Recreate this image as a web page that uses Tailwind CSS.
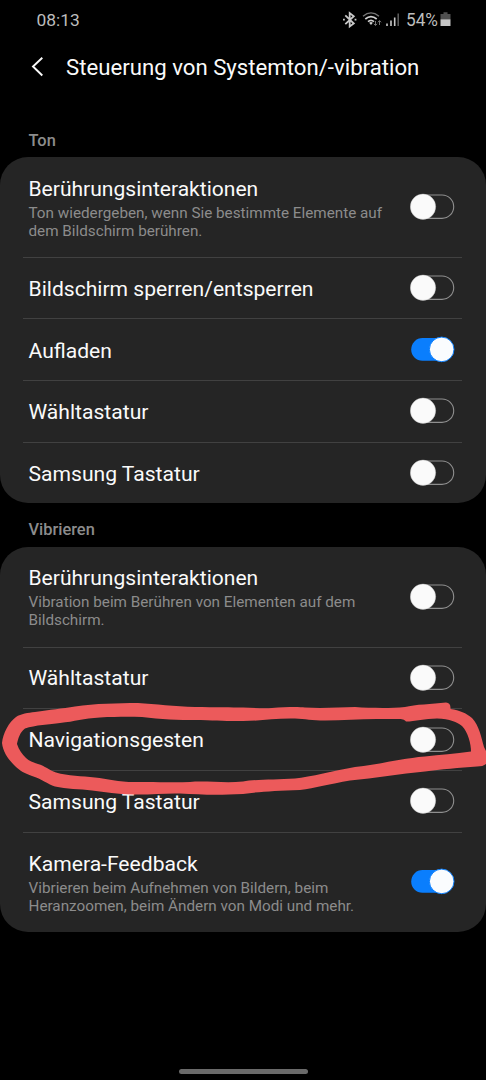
<!DOCTYPE html>
<html lang="de">
<head>
<meta charset="utf-8">
<title>Steuerung von Systemton/-vibration</title>
<script src="https://cdn.jsdelivr.net/npm/@tailwindcss/browser@4"></script>
</head>
<body class="bg-black">
<svg class="hidden">
  <symbol id="off" viewBox="0 0 46 28"><rect x="3.3" y="2" width="40.4" height="23.4" rx="11.7" fill="none" stroke="#8f8f8f" stroke-width="1.1"/><circle cx="13" cy="13.7" r="12.7" fill="#fafafa" stroke="#bbb" stroke-width=".4"/></symbol>
  <symbol id="on" viewBox="0 0 46 28"><rect x="1.2" y="2.1" width="42.3" height="22.6" rx="11.3" fill="#0a7efd"/><circle cx="31.7" cy="13.4" r="12.3" fill="#fafcfe" stroke="#0a7efd" stroke-width="1"/></symbol>
</svg>
<div class="relative flex h-[1080px] w-[486px] flex-col overflow-hidden bg-black font-['Roboto',sans-serif] text-[#fafafa]">
  <header class="flex h-10 shrink-0 items-center justify-between pr-[34px] pl-[36.5px] text-[#bdbdbd]">
    <span class="text-[17.4px] leading-10">08:13</span>
    <svg class="h-[18px] w-[110px]" viewBox="342 11 110 18" fill="none">
      <path d="M345.3 15.300l8.500 8.200-4.100 3V13l4.100 3.200-8.500 8" stroke="#c8c8c8" stroke-width="1.8"/>
      <path d="M343 19.7h1.8M354.6 19.7h1.8" stroke="#c8c8c8" stroke-width="1.7"/>
      <path d="M363 16.2q8-6.600 16 0" stroke="#777" stroke-width="1.4"/>
      <path d="M365.300 19q5.700-4.800 11.400 0M368 21.700q3-2.600 6 0" stroke="#d0d0d0" stroke-width="1.7"/>
      <path d="M369.100 22.800q1.900-1.500 3.800 0l-1.900 2.200z" fill="#d0d0d0"/>
      <path d="M375.500 21v4.300m-1.600-1.500l1.600 1.700 1.600-1.700M379.500 25v-4.300m-1.600 1.600l1.600-1.700 1.600 1.700" stroke="#777" stroke-width="1"/>
      <path d="M387 23.500V26M391 20.500V26M394.700 17.500V26" stroke="#c8c8c8" stroke-width="1.6"/>
      <path d="M398.200 13.500V26" stroke="#666" stroke-width="1.4"/>
      <text x="406" y="26" font-size="17.6" fill="#bdbdbd" textLength="32" lengthAdjust="spacingAndGlyphs">54%</text>
      <path d="M440.500 14h3v-1.700h4V14h3v5.500h-10z" fill="#505050"/>
      <path d="M440.500 19.300h10V26h-10z" fill="#c6c6c6"/>
    </svg>
  </header>

  <div class="flex h-[54px] shrink-0 items-center pl-[30px]">
    <svg class="h-6 w-4" viewBox="0 0 16 24" fill="none" stroke="#fafafa" stroke-width="1.9"><path d="M12.3 2.7L3 11.5l9.3 9"/></svg>
    <h1 class="ml-5 text-[22.2px] leading-[54px] whitespace-nowrap">Steuerung von Systemton/-vibration</h1>
  </div>

  <h2 class="mt-[35.5px] h-[27px] shrink-0 pl-[28.5px] text-[16.4px] leading-[22px] font-medium text-[#8c8c8c]">Ton</h2>
  <section class="h-[346.5px] shrink-0 rounded-[28px] bg-[#252525] pr-6 pl-[23px]">
    <div class="flex h-[101.2px] justify-between border-b border-[#414141] pr-1.5 pl-[5.5px]">
      <div class="pt-5"><p class="text-[21.05px] leading-6">Berührungsinteraktionen</p><p class="mt-[3px] text-[15.25px] leading-[18px] whitespace-nowrap text-[#8c8c8c]">Ton wiedergeben, wenn Sie bestimmte Elemente auf<br>dem Bildschirm berühren.</p></div>
      <svg class="h-7 w-[46px] self-center"><use href="#off"/></svg>
    </div>
    <div class="flex h-[61.7px] justify-between border-b border-[#414141] pr-1.5 pl-[5.5px]">
      <p class="pt-[19.5px] text-[21.1px] leading-6">Bildschirm sperren/entsperren</p><svg class="h-7 w-[46px] self-center"><use href="#off"/></svg>
    </div>
    <div class="flex h-[61.7px] justify-between border-b border-[#414141] pr-1.5 pl-[5.5px]">
      <p class="pt-[19.5px] text-[21.1px] leading-6">Aufladen</p><svg class="h-7 w-[46px] self-center"><use href="#on"/></svg>
    </div>
    <div class="flex h-[61.7px] justify-between border-b border-[#414141] pr-1.5 pl-[5.5px]">
      <p class="pt-[18.8px] text-[21.1px] leading-6">Wähltastatur</p><svg class="h-7 w-[46px] self-center"><use href="#off"/></svg>
    </div>
    <div class="flex h-[60.2px] justify-between pr-1.5 pl-[5.5px]">
      <p class="pt-[18.8px] text-[21.1px] leading-6">Samsung Tastatur</p><svg class="h-7 w-[46px] self-center"><use href="#off"/></svg>
    </div>
  </section>

  <h2 class="mt-4 h-[27.5px] shrink-0 pl-[28.5px] text-[16.4px] leading-[22px] font-medium text-[#8c8c8c]">Vibrieren</h2>
  <section class="h-[385.5px] shrink-0 rounded-[28px] bg-[#252525] pr-6 pl-[23px]">
    <div class="flex h-[101.2px] justify-between border-b border-[#414141] pr-1.5 pl-[5.5px]">
      <div class="pt-[19px]"><p class="text-[21.05px] leading-6">Berührungsinteraktionen</p><p class="mt-[3px] text-[15.25px] leading-[18px] whitespace-nowrap text-[#8c8c8c]">Vibration beim Berühren von Elementen auf dem<br>Bildschirm.</p></div>
      <svg class="h-7 w-[46px] self-center"><use href="#off"/></svg>
    </div>
    <div class="flex h-[61.7px] justify-between border-b border-[#414141] pr-1.5 pl-[5.5px]">
      <p class="pt-[18.8px] text-[21.1px] leading-6">Wähltastatur</p><svg class="h-7 w-[46px] self-center"><use href="#off"/></svg>
    </div>
    <div class="flex h-[61.7px] justify-between border-b border-[#414141] pr-1.5 pl-[5.5px]">
      <p class="pt-[18.8px] text-[21.1px] leading-6">Navigationsgesten</p><svg class="h-7 w-[46px] self-center"><use href="#off"/></svg>
    </div>
    <div class="flex h-[61.7px] justify-between border-b border-[#414141] pr-1.5 pl-[5.5px]">
      <p class="pt-[18.8px] text-[21.1px] leading-6">Samsung Tastatur</p><svg class="h-7 w-[46px] self-center"><use href="#off"/></svg>
    </div>
    <div class="flex h-[99.2px] justify-between pr-1.5 pl-[5.5px]">
      <div class="pt-[18.8px]"><p class="text-[21.1px] leading-6">Kamera-Feedback</p><p class="mt-[3px] text-[15.25px] leading-[18px] whitespace-nowrap text-[#8c8c8c]">Vibrieren beim Aufnehmen von Bildern, beim<br>Heranzoomen, beim Ändern von Modi und mehr.</p></div>
      <svg class="h-7 w-[46px] self-center"><use href="#on"/></svg>
    </div>
  </section>

  <div class="mt-auto mb-1.5 h-[5px] w-[129px] shrink-0 self-center rounded-full bg-[#6a6a6a]"></div>

  <!-- hand-drawn marker around "Navigationsgesten" -->
  <svg class="pointer-events-none absolute top-[690px] left-0" width="486" height="120" viewBox="0 0 486 120">
    <path fill="#ec5a5b" fill-rule="evenodd" d="M2 53C3 43 9 32 16 27C21 23.500 28 23 35 22C50 19.800 62 18.500 75 16.500C95 13.300 118 13.300 138 13C155 14 175 16.500 195 17C215 17.300 232 17.300 243 17.500C253 18 265 18.500 272 18C285 17 298 16.500 305 17.500C320 18.500 340 17.500 355 17C370 18 390 18.500 405 17C415 14.500 432 14 446 12.500Q451 13 450.500 19C460 20.500 466 23 472 28C479 35 481.500 48 484 57L486 61V74Q483 76.500 477 76.500C460 78 440 79 425 81.500C400 84 375 88 350 90.500C330 94 315 98 300 100C275 101 260 101.500 243 104C215 105.500 200 104.500 180 103.500C165 103 150 105 132 104.500C118 104 105 102 92 100.500C80 99 66 99 55 96.500C47 94 42 89 32 86C25 83.500 20 81 15 76C8 69 3 62 2 53ZM17 54C18 49 20 42 25 38.500C35 35 50 34.500 60 33C75 31.500 83 28.500 100 27.500C115 26.800 127 26.700 142 27C160 29.500 180 30 195 30C215 30.500 228 31.300 243 31C260 31 275 28 295 28.500C305 29 312 30.500 325 30.500C345 30 365 28.500 385 29C400 29.500 403 28 406 31.500C415 31.500 425 28.700 437 28.500C450 29 457 32 462 36C468 42 471 54 471 61.500C455 64 440 64.500 425 66.500C400 68.500 380 74.500 355 77C335 80.500 310 87 295 88.500C275 90 255 89 243 91.500C225 93.500 205 90.500 190 92C170 93 155 91.500 138 92C120 92.500 108 89 95 87.500C82 86 68 86 56 82.500C49 80 45 76 38 74C33 72.500 29 71 26 68C22 64 19 60 17 54Z"/>
  </svg>
</div>
</body>
</html>
